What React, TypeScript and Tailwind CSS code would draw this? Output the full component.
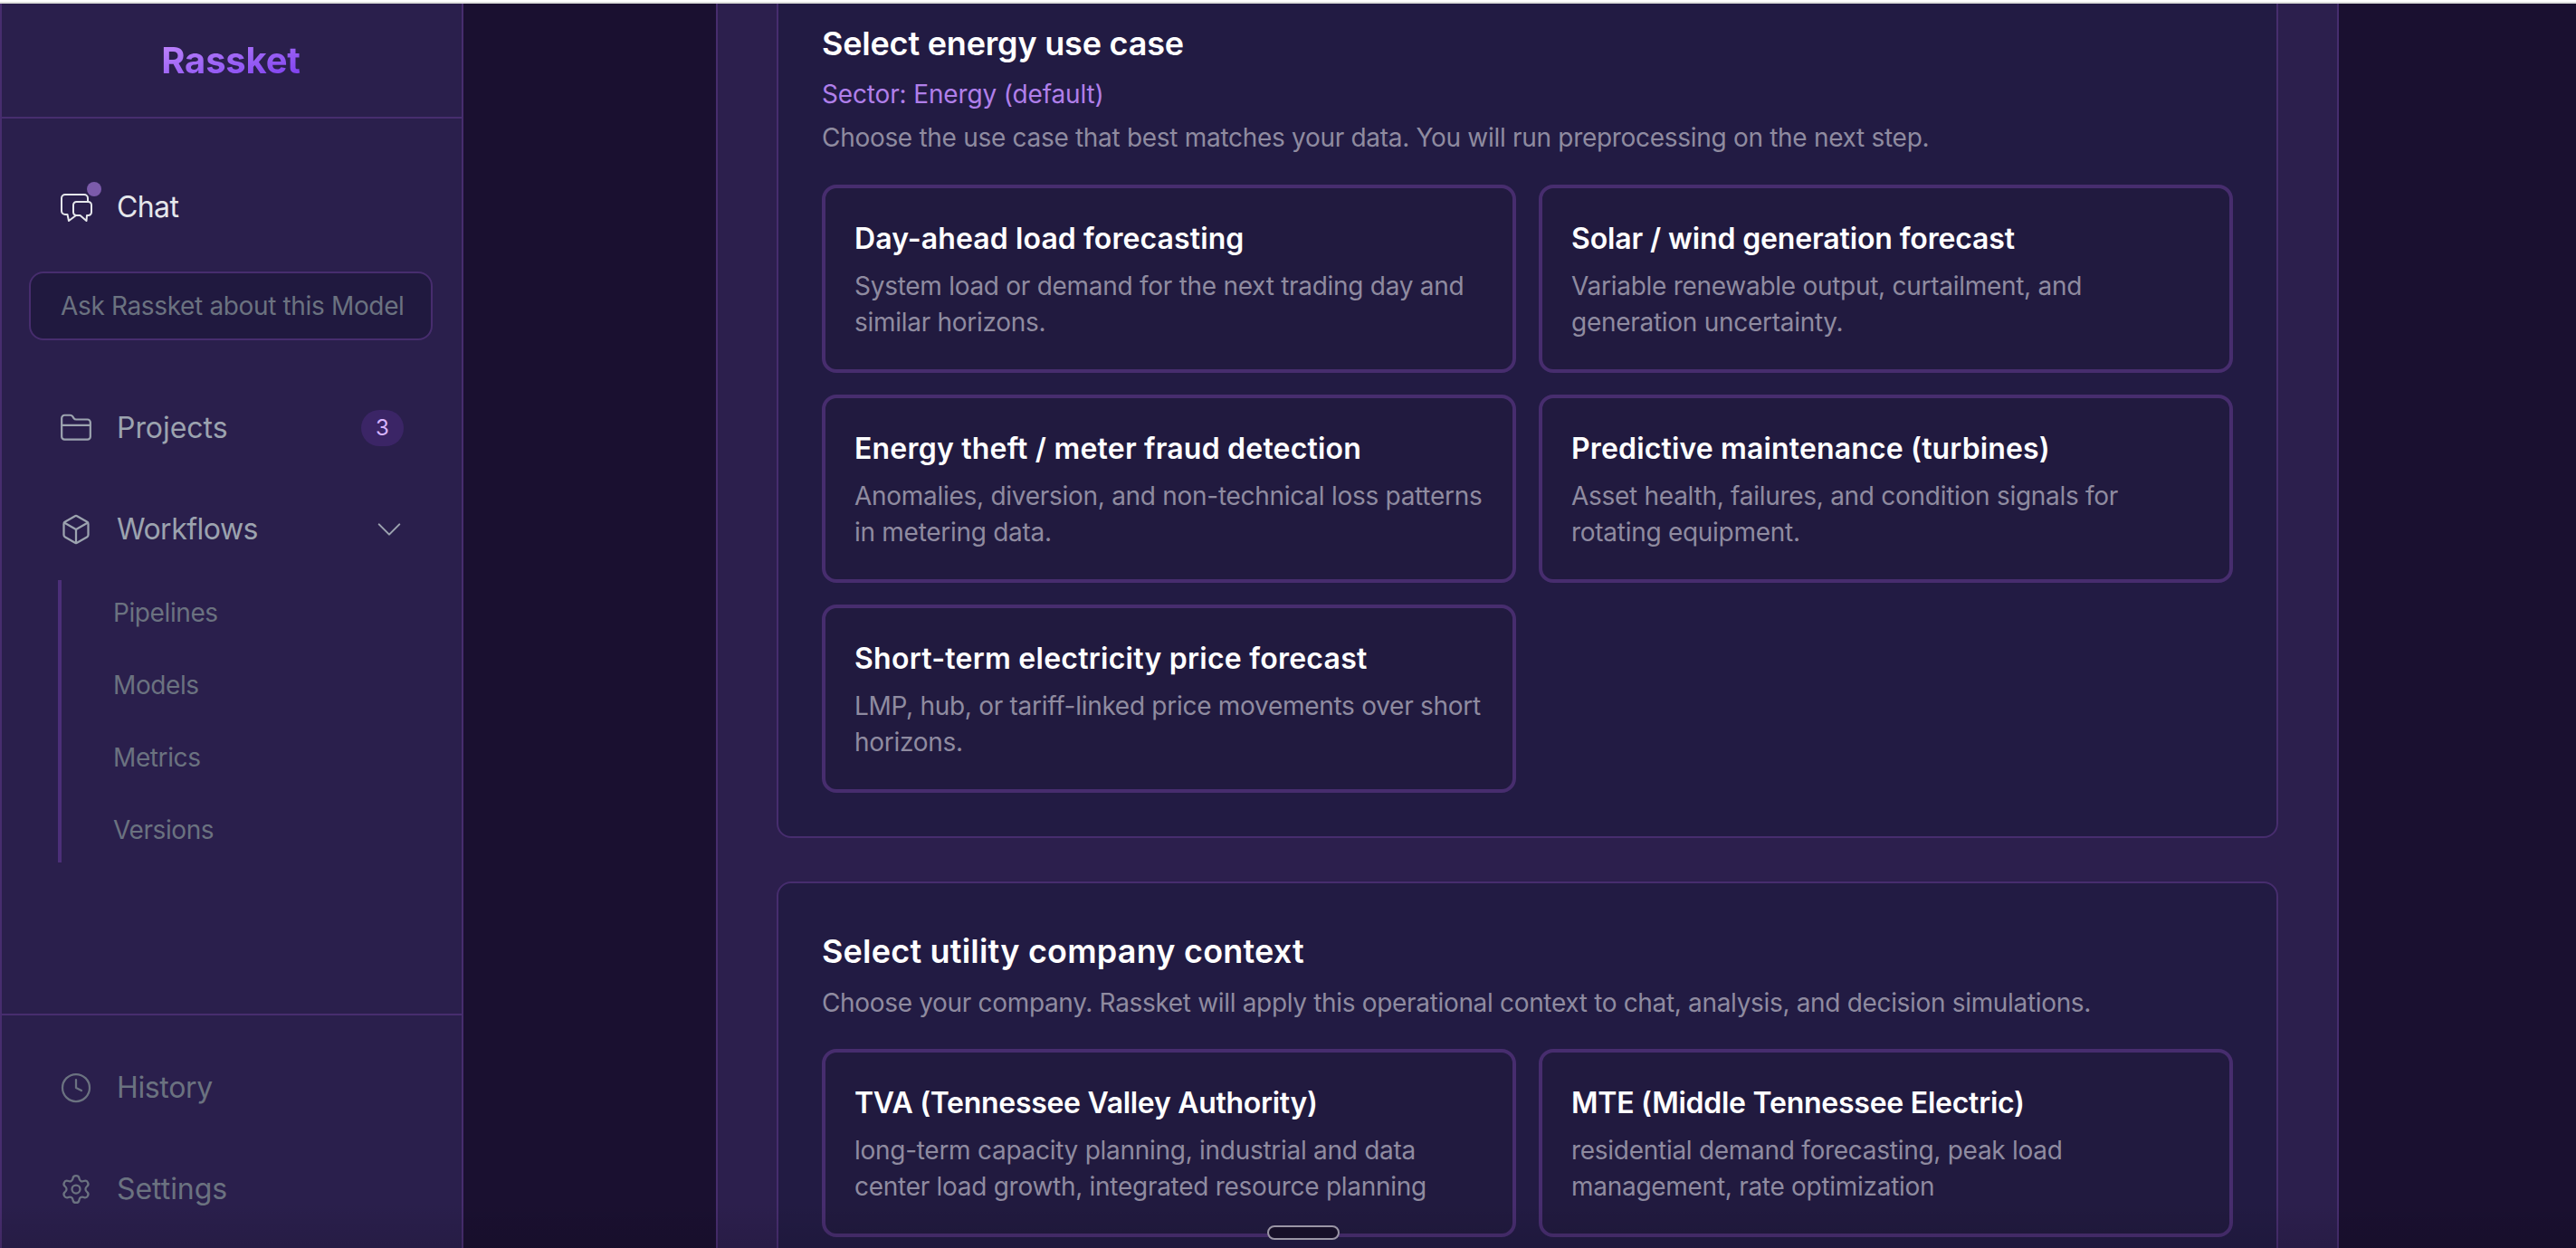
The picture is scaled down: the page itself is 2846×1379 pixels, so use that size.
import { Box, Clock, FolderClosed, Settings } from 'lucide-react'

const FONT = "font-['Inter','Liberation_Sans',sans-serif]"

// ─── Sidebar ───────────────────────────────────────────

function ChatIcon() {
  return (
    <svg viewBox="0 0 36 32" className="h-8 w-9" fill="none" stroke="currentColor" strokeWidth="2" strokeLinejoin="round" strokeLinecap="round">
      <path d="M31 9 V6 a4 4 0 0 0 -4 -4 H6 a4 4 0 0 0 -4 4 V20 a4 4 0 0 0 4 4 H8.5 L10 31 L18 25" />
      <path d="M18.5 10 H31.5 a3.5 3.5 0 0 1 3.5 3.5 V21.5 a3.5 3.5 0 0 1 -3.5 3.5 H30 L29.5 31 L22.5 25 H18.5 a3.5 3.5 0 0 1 -3.5 -3.5 V13.5 a3.5 3.5 0 0 1 3.5 -3.5 Z" />
    </svg>
  )
}

function Sidebar() {
  return (
    <aside className="flex h-full w-[512px] shrink-0 flex-col border-r-2 border-l-2 border-[#472d6e] bg-[#2a1f4c]">
      <div className="flex h-[127px] shrink-0 items-center justify-center border-b-2 border-[#472d6e]">
        <span className="-ml-[2px] bg-gradient-to-br from-[#c084fc] to-[#7c3aed] bg-clip-text text-[40px] leading-none font-bold tracking-[-0.2px] text-transparent">
          Rassket
        </span>
      </div>

      <div className="flex flex-1 flex-col pr-[32px] pl-[30px]">
        <div className="mt-[80px] flex h-9 items-center gap-[27px] pl-[34px] text-[#e5e7eb]">
          <div className="relative">
            <ChatIcon />
            <span className="absolute -top-[12px] -right-[10px] size-4 rounded-full bg-[#7c5bab]" />
          </div>
          <span className="text-[32px] leading-none tracking-[-0.6px]">Chat</span>
        </div>

        <div className="mt-[53px] flex h-[76px] items-center rounded-2xl border-2 border-[#472d6e] bg-[#20193f] pl-[33px] text-[28px] text-[#6b7280]">
          <span className="tracking-[-0.35px] whitespace-nowrap">Ask Rassket about this Model</span>
        </div>

        <div className="mt-[77px] flex h-10 items-center pl-[34px] text-[#9ca3af]">
          <FolderClosed size={38} strokeWidth={1.4} className="-ml-px shrink-0" />
          <span className="ml-[26px] text-[32px] tracking-[-0.05px]">Projects</span>
          <span className="mr-[32px] ml-auto flex h-10 w-[47px] items-center justify-center rounded-full bg-[#3b2566] text-2xl text-[#d8b4fe]">
            3
          </span>
        </div>

        <div className="mt-[72px] flex h-10 items-center pl-[34px] text-[#9ca3af]">
          <Box size={36} strokeWidth={1.5} className="shrink-0" />
          <span className="ml-[27px] text-[32px] tracking-[-0.5px]">Workflows</span>
          <svg viewBox="0 0 24 24" className="mr-[30px] ml-auto size-9" fill="none" stroke="currentColor" strokeWidth="1.4" strokeLinecap="round" strokeLinejoin="round">
            <path d="M19.5 8.25l-7.5 7.5-7.5-7.5" />
          </svg>
        </div>

        <div className="mt-[36px] ml-[32px] flex h-[312px] flex-col justify-center border-l-4 border-[#4c2f78] pl-[57px] text-[28px] text-[#6b7280]">
          {['Pipelines', 'Models', 'Metrics', 'Versions'].map(item => (
            <span key={item} className="flex h-[80px] shrink-0 items-center tracking-[-0.4px]">
              {item}
            </span>
          ))}
        </div>
      </div>

      <div className="flex h-[259px] shrink-0 flex-col border-t-2 border-[#472d6e] pr-[32px] pl-[30px] text-[#6b7280]">
        <div className="mt-[60px] flex h-10 items-center pl-[34px]">
          <Clock size={36} strokeWidth={1.5} className="shrink-0" />
          <span className="ml-[27px] text-[32px] tracking-[-0.35px]">History</span>
        </div>
        <div className="mt-[72px] flex h-10 items-center pl-[34px]">
          <Settings size={36} strokeWidth={1.5} className="shrink-0" />
          <span className="ml-[27px] text-[32px] tracking-[-0.05px]">Settings</span>
        </div>
      </div>
    </aside>
  )
}

// ─── Option cards ───────────────────────────────────────────

function OptionCard({ title, text, track }: { title: string; text: string[]; track: string }) {
  return (
    <div className="h-[208px] rounded-2xl border-4 border-[#472d6e] bg-[#211a3f] px-[32px] pt-[36px]">
      <h3 className={`text-[32px] leading-[40px] font-semibold text-white ${track}`}>{title}</h3>
      <p className="mt-[12px] text-[28px] leading-[40px] tracking-[-0.28px] text-[#8f8ba0]">
        {text.map(line => (
          <span key={line} className="block whitespace-nowrap">
            {line}
          </span>
        ))}
      </p>
    </div>
  )
}

const USE_CASES = [
  { title: 'Day-ahead load forecasting', track: 'tracking-[0.1px]', text: ['System load or demand for the next trading day and', 'similar horizons.'] },
  { title: 'Solar / wind generation forecast', track: 'tracking-[-0.13px]', text: ['Variable renewable output, curtailment, and', 'generation uncertainty.'] },
  { title: 'Energy theft / meter fraud detection', track: 'tracking-[0.2px]', text: ['Anomalies, diversion, and non-technical loss patterns', 'in metering data.'] },
  { title: 'Predictive maintenance (turbines)', track: 'tracking-[0.15px]', text: ['Asset health, failures, and condition signals for', 'rotating equipment.'] },
  { title: 'Short-term electricity price forecast', track: 'tracking-[0.25px]', text: ['LMP, hub, or tariff-linked price movements over short', 'horizons.'] },
]

const COMPANIES = [
  { title: 'TVA (Tennessee Valley Authority)', track: 'tracking-[-0.3px]', text: ['long-term capacity planning, industrial and data', 'center load growth, integrated resource planning'] },
  { title: 'MTE (Middle Tennessee Electric)', track: 'tracking-[-0.25px]', text: ['residential demand forecasting, peak load', 'management, rate optimization'] },
]

export default function App() {
  return (
    <div className={`relative flex h-[1379px] w-[2846px] flex-col overflow-hidden bg-white ${FONT}`}>
      <div className="h-[4px] shrink-0 border-t-2 border-white bg-[#dfe0dd]" />
      <div className="flex min-h-0 flex-1">
        <Sidebar />

        <main className="flex h-full flex-1 justify-center overflow-hidden bg-[#1a1030] pl-[279px] pr-[262px]">
          <div className="h-full w-full overflow-hidden border-x-2 border-[#472d6e] bg-[#2c1f4d] px-[65px]">
            <section className="-mt-[100px] h-[1022px] rounded-2xl border-2 border-[#472d6e] bg-[#221b43] px-[48px] pt-[119px]">
              <h2 className="text-[36px] leading-[46px] font-semibold tracking-[-0.2px] text-white">Select energy use case</h2>
              <p className="mt-[13px] text-[28px] leading-[40px] tracking-[-0.15px] text-[#b07fea]">Sector: Energy (default)</p>
              <p className="mt-[8px] text-[28px] leading-[40px] tracking-[-0.3px] text-[#8f8ba0]">
                Choose the use case that best matches your data. You will run preprocessing on the next step.
              </p>
              <div className="mt-[32px] grid grid-cols-2 gap-x-[25px] gap-y-[24px]">
                {USE_CASES.map(c => (
                  <OptionCard key={c.title} title={c.title} text={c.text} track={c.track} />
                ))}
              </div>
            </section>

            <section className="mt-[48px] rounded-2xl border-2 border-[#472d6e] bg-[#221b43] px-[48px] pt-[52px] pb-[50px]">
              <h2 className="text-[36px] leading-[46px] font-semibold tracking-[0.2px] text-white">Select utility company context</h2>
              <p className="mt-[14px] text-[28px] leading-[40px] tracking-[-0.33px] text-[#8f8ba0]">
                Choose your company. Rassket will apply this operational context to chat, analysis, and decision simulations.
              </p>
              <div className="mt-[31px] grid grid-cols-2 gap-x-[25px] gap-y-[24px]">
                {COMPANIES.map(c => (
                  <OptionCard key={c.title} title={c.title} text={c.text} track={c.track} />
                ))}
              </div>
            </section>
          </div>
        </main>
      </div>

      {/* Bottom fade and home handle sit over the page */}
      <div className="pointer-events-none absolute inset-x-0 bottom-0 h-[50px] bg-gradient-to-b from-transparent to-black/10" />
      <div className="absolute top-[1354px] left-[1400px] h-4 w-20 rounded-full border-2 border-[#9a95a5] bg-[#171029]" />
    </div>
  )
}
